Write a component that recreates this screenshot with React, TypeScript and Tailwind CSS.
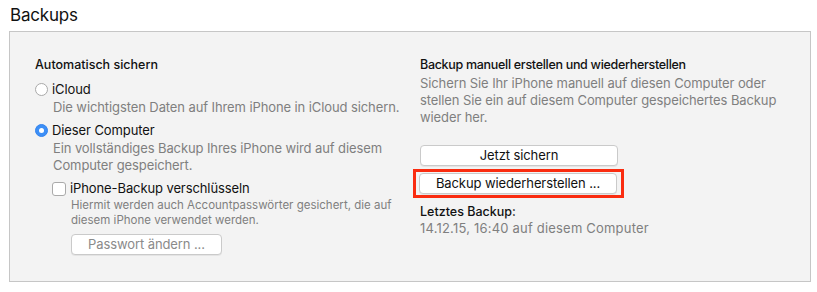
import React from "react";

const font = { fontFamily: 'Inter, "Liberation Sans", Arial, sans-serif' };

function Radio({ checked }: { checked?: boolean }) {
  if (checked) {
    return (
      <span className="flex h-[13px] w-[13px] shrink-0 items-center justify-center rounded-full bg-[#3d8ff6] border border-[#3484ee]">
        <span className="h-[5px] w-[5px] rounded-full bg-white" />
      </span>
    );
  }
  return <span className="h-[13px] w-[13px] shrink-0 rounded-full border border-[#a9a9a9] bg-white" />;
}

function Btn({ children, disabled, w }: { children: React.ReactNode; disabled?: boolean; w: string }) {
  return (
    <div
      className={`${w} flex h-[21px] items-center justify-center whitespace-nowrap rounded-[4px] border border-[#cacaca] bg-white text-[13px] tracking-[-0.1px] shadow-[0_1px_0_rgba(0,0,0,0.06)] ${
        disabled ? "text-[#8a8a8a] bg-[#fbfbfb]" : "text-[#111]"
      }`}
    >
      {children}
    </div>
  );
}

export default function App() {
  return (
    <div className="h-[292px] w-[817px] whitespace-nowrap bg-white" style={font}>
      <div className="pl-[10px] pt-[4px] text-[17px] leading-[22px] tracking-[-0.2px] text-[#111]">Backups</div>
      <div className="ml-[9px] mt-[5px] flex h-[251px] w-[802px] border border-[#c6c6c6] bg-[#f3f3f3] pt-[24px]">
        <div className="w-[385px] pl-[25px]">
          <div className="text-[12.5px] font-medium leading-[17px] tracking-[0px] text-[#111]">Automatisch sichern</div>
          <div className="mt-[8px] flex items-center gap-[4px] text-[13px] leading-[17px] tracking-[-0.1px] text-[#111]">
            <Radio />
            <span>iCloud</span>
          </div>
          <div className="ml-[18px] mt-[1px] text-[13px] leading-[17px] tracking-[-0.1px] text-[#7f7f7f]">
            Die wichtigsten Daten auf Ihrem iPhone in iCloud sichern.
          </div>
          <div className="mt-[6px] flex items-center gap-[4px] text-[13px] leading-[17px] tracking-[-0.1px] text-[#111]">
            <Radio checked />
            <span>Dieser Computer</span>
          </div>
          <div className="ml-[18px] mt-[1px] text-[13px] leading-[17px] tracking-[-0.1px] text-[#7f7f7f]">
            Ein vollständiges Backup Ihres iPhone wird auf diesem
            <br />
            Computer gespeichert.
          </div>
          <div className="ml-[17px] mt-[6px] flex items-center gap-[4px] text-[13px] leading-[17px] tracking-[-0.1px] text-[#111]">
            <span className="h-[14px] w-[14px] shrink-0 rounded-[3px] border border-[#aaaaaa] bg-white" />
            <span>iPhone-Backup verschlüsseln</span>
          </div>
          <div className="ml-[36px] mt-[1px] text-[11.5px] leading-[15px] text-[#7f7f7f]">
            Hiermit werden auch Accountpasswörter gesichert, die auf
            <br />
            diesem iPhone verwendet werden.
          </div>
          <div className="ml-[36px] mt-[6px]">
            <Btn disabled w="w-[151px]">Passwort ändern ...</Btn>
          </div>
        </div>
        <div className="w-[400px] pl-[25px]">
          <div className="text-[12.5px] font-medium leading-[17px] tracking-[-0.3px] text-[#111]">
            Backup manuell erstellen und wiederherstellen
          </div>
          <div className="mt-[2px] text-[13px] leading-[17px] tracking-[-0.1px] text-[#7f7f7f]">
            Sichern Sie Ihr iPhone manuell auf diesen Computer oder
            <br />
            stellen Sie ein auf diesem Computer gespeichertes Backup
            <br />
            wieder her.
          </div>
          <div className="mt-[19px]">
            <Btn w="w-[198px]">Jetzt sichern</Btn>
          </div>
          <div className="-ml-[7px] mt-[3px] w-[211px] border-[3px] border-[#fa2c10] px-[3px] py-[1px]">
            <Btn w="w-[198px]">Backup wiederherstellen ...</Btn>
          </div>
          <div className="mt-[6px] text-[12.5px] font-medium leading-[16px] tracking-[0px] text-[#111]">Letztes Backup:</div>
          <div className="text-[13px] leading-[17px] tracking-[0.2px] text-[#7f7f7f]">14.12.15, 16:40 auf diesem Computer</div>
        </div>
      </div>
    </div>
  );
}
